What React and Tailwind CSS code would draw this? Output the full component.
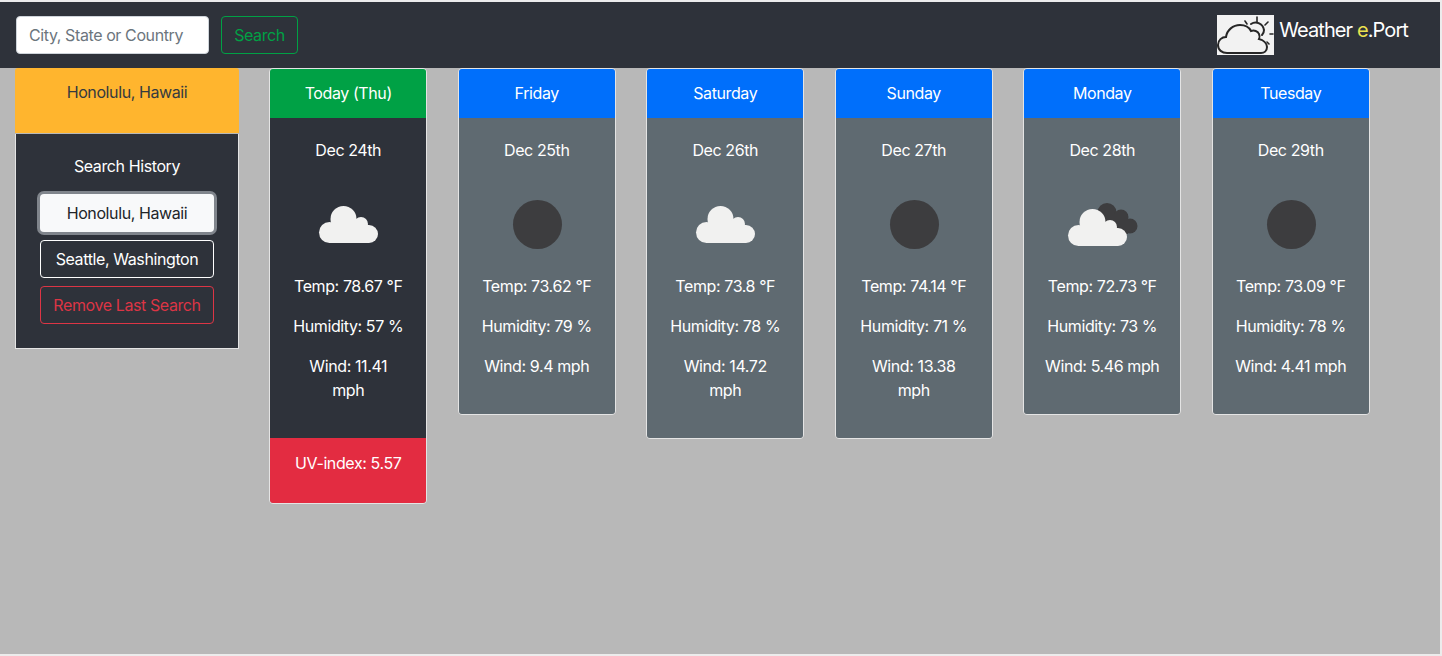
import React from 'react';

const forecast = [
  { title: 'Friday', date: 'Dec 25th', icon: 'mist', temp: '73.62', humidity: '79', wind: '9.4' },
  { title: 'Saturday', date: 'Dec 26th', icon: 'cloud', temp: '73.8', humidity: '78', wind: '14.72' },
  { title: 'Sunday', date: 'Dec 27th', icon: 'mist', temp: '74.14', humidity: '71', wind: '13.38' },
  { title: 'Monday', date: 'Dec 28th', icon: 'broken', temp: '72.73', humidity: '73', wind: '5.46' },
  { title: 'Tuesday', date: 'Dec 29th', icon: 'mist', temp: '73.09', humidity: '78', wind: '4.41' },
];

const CloudShape = ({ fill = '#f1f1f0' }) => (
  <g fill={fill}>
    <circle cx="45.5" cy="41" r="13" />
    <circle cx="63" cy="46" r="7" />
    <circle cx="31.5" cy="54.5" r="10.5" />
    <circle cx="71" cy="56" r="9" />
    <rect x="31" y="47" width="40" height="18" />
  </g>
);

const WeatherIcon = ({ type }) => (
  <svg width="100" height="96" viewBox="0 0 100 96" className="mx-auto block">
    {type === 'mist' && <circle cx="50.5" cy="46.5" r="24.5" fill="#3d3d3f" />}
    {type === 'cloud' && <CloudShape />}
    {type === 'broken' && (
      <>
        <g fill="#3d3d3f">
          <circle cx="55" cy="34.5" r="9.5" />
          <circle cx="69" cy="39" r="7.5" />
          <circle cx="78" cy="48" r="7.5" />
          <rect x="50" y="36" width="26" height="20" />
        </g>
        <g transform="translate(-5 3)">
          <CloudShape />
        </g>
      </>
    )}
  </svg>
);

const Logo = () => (
  <svg width="57" height="40" viewBox="0 0 57 40" className="block bg-[#f2f2f2]">
    <g stroke="#262626" strokeLinecap="round" fill="none">
      <path d="M40 2v5M28 6l2 3M51 7l-3 3M53 19h3M50 27l2 2" strokeWidth="1.6" />
      <path d="M34 9a8.500 8.500 0 0 1 13 6c0 2-1 4-2 5" strokeWidth="2" />
      <path d="M10 38c-5 0-9-3-9-8 0-5 4-8 8-8 1-7 7-12 14-12 5 0 9 2 11 6 3-1 7 0 8 3 1 2 1 3 0 5 4 1 8 4 8 8 0 4-3 6-6 6z" strokeWidth="2" />
    </g>
  </svg>
);

const Card = ({ title, date, icon, temp, humidity, wind, headerBg, bodyBg, uv, breakWind }) => (
  <div className="w-[158px] shrink-0 self-start rounded-[4px] border border-[#e4e4e4] overflow-hidden text-center text-white">
    <div className={`${headerBg} h-[49px] leading-[48px]`}>{title}</div>
    <div className={`${bodyBg} px-[19px] py-5`}>
      <p>{date}</p>
      <div className="mt-[16px]">
        <WeatherIcon type={icon} />
      </div>
      <p>Temp: {temp} °F</p>
      <p className="mt-4">Humidity: {humidity} %</p>
      <p className="mt-4 mb-4">
        Wind: {wind}
        {breakWind ? <br /> : ' '}
        mph
      </p>
    </div>
    {uv && <div className="bg-[#e32c41] h-[65px] pt-[13px]">UV-index: {uv}</div>}
  </div>
);

export default function App() {
  return (
    <div
      className="h-screen bg-[#ececec] pt-[2px] pb-[2px] pr-[2px] text-[16px] leading-[24px] text-white overflow-hidden"
      style={{ fontFamily: 'Inter, "Liberation Sans", sans-serif', letterSpacing: '-0.4px' }}
    >
      <div className="h-full bg-[#b8b8b8]">
        <nav className="h-[66px] bg-[#2e323a] flex items-center justify-between pl-[16px] pr-[32px]">
          <div className="flex items-center gap-3">
            <input
              placeholder="City, State or Country"
              className="w-[193px] h-[38px] rounded-[4px] bg-white border border-[#ced4da] px-3 text-[#495057] placeholder:text-[#6c757d] outline-none"
            />
            <button className="w-[77px] h-[38px] rounded-[4px] border border-[#00a145] text-[#00a145]">Search</button>
          </div>
          <div className="flex items-center gap-[5px]">
            <Logo />
            <span className="text-[20px] leading-[30px] pb-[10px] tracking-[-0.9px]">
              Weather <span className="text-[#ebe34f]">e</span>.Port
            </span>
          </div>
        </nav>

        <div className="flex pl-[15px] gap-[30.5px]">
          <aside className="w-[224px] shrink-0 mr-[-0.25px] text-center">
            <div className="h-[65px] bg-[#ffb52e] text-[#343a40] rounded-t-[3px] pt-[12px]">Honolulu, Hawaii</div>
            <div className="mt-px h-[215px] bg-[#2e323a] border-x border-b border-[#e4e4e4] px-6 pt-5">
              <p>Search History</p>
              <div className="mt-4 flex flex-col gap-2">
                <button className="h-[38px] rounded-[4px] bg-[#f8f9fa] text-[#212529] ring-[3px] ring-[#80858c]">Honolulu, Hawaii</button>
                <button className="h-[38px] rounded-[4px] border border-white">Seattle, Washington</button>
                <button className="h-[38px] rounded-[4px] border border-[#dc3545] text-[#dc3545]">Remove Last Search</button>
              </div>
            </div>
          </aside>

          <Card
            title="Today (Thu)"
            date="Dec 24th"
            icon="cloud"
            temp="78.67"
            humidity="57"
            wind="11.41"
            headerBg="bg-[#00a145]"
            bodyBg="bg-[#2e323a]"
            uv="5.57"
            breakWind
          />
          {forecast.map((day) => (
            <Card key={day.title} {...day} headerBg="bg-[#006ffb]" bodyBg="bg-[#5f6a71]" />
          ))}
        </div>
      </div>
    </div>
  );
}
